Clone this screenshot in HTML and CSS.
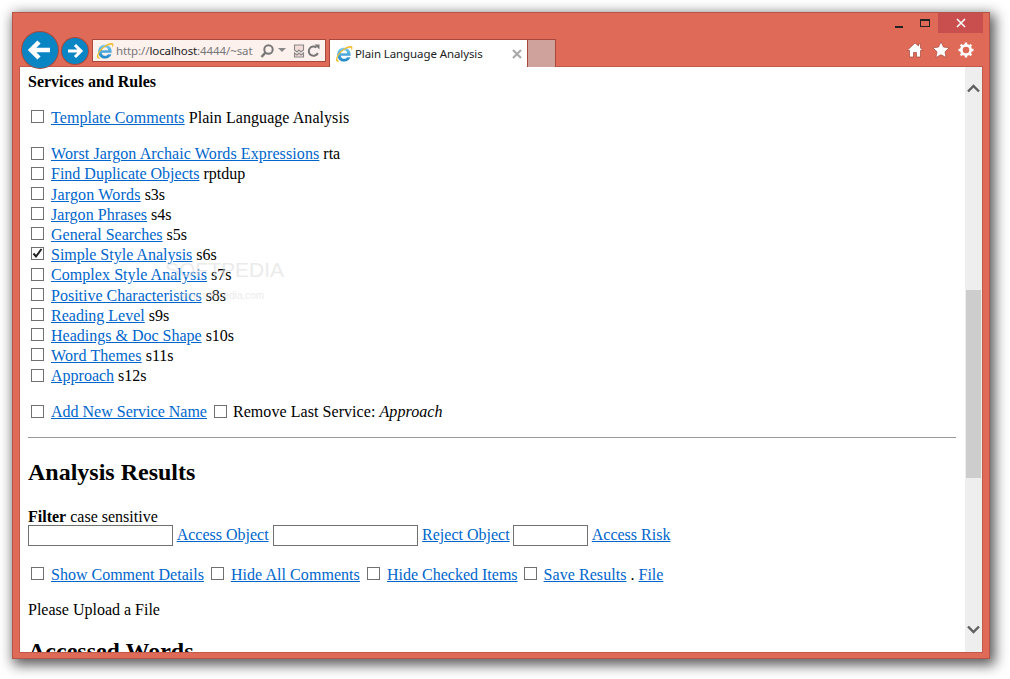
FILE: index.html
```html
<!DOCTYPE html>
<html lang="en">
<head>
<meta charset="utf-8">
<title>Plain Language Analysis</title>
<link rel="stylesheet" href="styles.css">
</head>
<body>
<svg class="defs" width="0" height="0" aria-hidden="true">
  <defs>
    <linearGradient id="ieblue" x1="0" y1="0" x2="0" y2="1"><stop offset="0" stop-color="#7ccdf2"/><stop offset="1" stop-color="#1c84c6"/></linearGradient>
    <symbol id="ie" viewBox="0 0 18 18">
      <g transform="translate(9 9.500) scale(1.350) translate(-9 -9.200)">
        <path d="M9 4.200c2.900 0 4.900 2 4.900 5v.9H6.600c.1 1.500 1.200 2.300 2.600 2.300 1 0 1.700-.4 2-1.100h2.600c-.6 2-2.400 3.100-4.600 3.100-3 0-5.200-2-5.200-5.100S6.100 4.200 9 4.200zm0 1.900c-1.300 0-2.200.8-2.400 2.200h4.700C11.200 6.900 10.300 6.100 9 6.100z" fill="url(#ieblue)"/>
      </g>
      <path d="M1.200 16C-.2 13.400 3.800 6.300 9.500 3.200c3-1.700 6.200-2.800 7.500-1.600.9.900.3 2.500-.8 4.300.3-1.500.3-2.600-.3-3-.9-.7-3.500.2-6 1.600C4.800 7.500 1.400 12.700 2.700 15.200c.5.800 1.800.9 3.300.4-1.800 1.100-3.900 1.500-4.800.4z" fill="#f2bd2e"/>
    </symbol>
  </defs>
</svg>
<div class="window">
  <div class="titlebar">
    <div class="caption caption-min"><span class="min-glyph"></span></div>
    <div class="caption caption-max"><span class="max-glyph"></span></div>
    <div class="caption caption-close">
      <svg width="10" height="10" viewBox="0 0 10 10"><path d="M1 1l8 8M9 1l-8 8" stroke="#fff" stroke-width="1.600"/></svg>
    </div>
  </div>
  <div class="toolbar">
    <div class="nav-back">
      <svg width="36" height="36" viewBox="0 0 36 36"><path d="M28 18H10M17 10l-8 8 8 8" fill="none" stroke="#fff" stroke-width="4.500"/></svg>
    </div>
    <div class="nav-forward">
      <svg width="26" height="26" viewBox="0 0 26 26"><path d="M6 13h13M13 7l6 6-6 6" fill="none" stroke="#fff" stroke-width="3"/></svg>
    </div>
    <div class="address">
      <svg class="fav" width="18" height="18"><use href="#ie"/></svg>
      <span class="url"><span class="dim">http://</span>localhost<span class="dim">:4444/~sat</span></span>
      <svg class="addr-icon" width="16" height="16" viewBox="0 0 16 16"><circle cx="9.500" cy="6.500" r="4.200" fill="none" stroke="#777" stroke-width="2"/><path d="M6.500 9.500L2.500 14" stroke="#777" stroke-width="2.500"/></svg>
      <svg class="addr-caret" width="8" height="5" viewBox="0 0 8 5"><path d="M0 0h8L4 4z" fill="#888"/></svg>
      <svg class="addr-compat" width="12" height="14" viewBox="0 0 12 14"><path d="M1.500 1h9v5l-2.500 2-2-2-2 2-2.500-2zM1.500 9l2.500 2 2-2 2 2 2.500-2v4h-9z" fill="#f3dcd7" stroke="#888" stroke-width="1.100"/></svg>
      <svg class="addr-refresh" width="13" height="14" viewBox="0 0 13 14"><path d="M10.800 9A4.700 4.700 0 1 1 9.500 3.500" fill="none" stroke="#777" stroke-width="2"/><path d="M7.500 0.500h5v5z" fill="#777"/></svg>
    </div>
    <div class="tab">
      <svg class="fav" width="18" height="18"><use href="#ie"/></svg>
      <span class="tab-title">Plain Language Analysis</span>
      <svg class="tab-close" width="10" height="10" viewBox="0 0 10 10"><path d="M1 1l8 8M9 1l-8 8" stroke="#aaa" stroke-width="2.200"/></svg>
    </div>
    <div class="tab-new"></div>
    <div class="tools">
      <svg width="18" height="16" viewBox="0 0 18 16"><path d="M9 1L1 8.500h2.500V15h4v-4.500h3V15h4V8.500H17L14.500 6V2h-2v2z" fill="#fff" stroke="#a8483c" stroke-width=".7"/></svg>
      <svg width="18" height="17" viewBox="0 0 18 17"><path d="M9 .8l2.500 5.300 5.700.7-4.200 4 1.100 5.700L9 13.700l-5.100 2.800L5 10.800.8 6.800l5.700-.7z" fill="#fff" stroke="#a8483c" stroke-width=".7"/></svg>
      <svg width="16" height="16" viewBox="0 0 16 16"><circle cx="8" cy="8" r="4.700" fill="none" stroke="#fff" stroke-width="2.800"/><path d="M8 .5v3M8 12.500v3M.5 8h3M12.500 8h3M2.700 2.700l2.100 2.100M11.200 11.200l2.100 2.100M13.300 2.700l-2.100 2.100M4.800 11.200l-2.100 2.100" stroke="#fff" stroke-width="2.400"/></svg>
    </div>
  </div>
  <div class="viewport">
    <main class="page">
      <p class="heading"><b>Services and Rules</b></p>
      <p class="row ls-s"><input class="cb" type="checkbox"><a href="#">Template Comments</a> Plain Language Analysis</p>
      <div class="list">
        <p class="row"><input class="cb" type="checkbox"><a class="ls-m" href="#">Worst Jargon Archaic Words Expressions</a> rta</p>
        <p class="row"><input class="cb" type="checkbox"><a href="#">Find Duplicate Objects</a> rptdup</p>
        <p class="row"><input class="cb" type="checkbox"><a class="ls-l" href="#">Jargon Words</a> s3s</p>
        <p class="row"><input class="cb" type="checkbox"><a class="ls-s" href="#">Jargon Phrases</a> s4s</p>
        <p class="row"><input class="cb" type="checkbox"><a href="#">General Searches</a> s5s</p>
        <p class="row"><input class="cb" type="checkbox" checked><a href="#">Simple Style Analysis</a> s6s</p>
        <p class="row"><input class="cb" type="checkbox"><a class="ls-s" href="#">Complex Style Analysis</a> s7s</p>
        <p class="row"><input class="cb" type="checkbox"><a href="#">Positive Characteristics</a> s8s</p>
        <p class="row"><input class="cb" type="checkbox"><a href="#">Reading Level</a> s9s</p>
        <p class="row"><input class="cb" type="checkbox"><a href="#">Headings &amp; Doc Shape</a> s10s</p>
        <p class="row"><input class="cb" type="checkbox"><a class="ls-m" href="#">Word Themes</a> s11s</p>
        <p class="row"><input class="cb" type="checkbox"><a href="#">Approach</a> s12s</p>
      </div>
      <p class="row"><input class="cb" type="checkbox"><a href="#">Add New Service Name</a> <input class="cb cb-gap cb-short" type="checkbox"><span class="ls-s">Remove Last Service: <i>Approach</i></span></p>
      <hr class="rule">
      <h2 class="title">Analysis Results</h2>
      <div class="filter">
        <div><b>Filter</b> case sensitive</div>
        <div class="filter-fields">
          <input class="field field-wide" type="text"> <a href="#">Access Object</a>
          <input class="field field-wide" type="text"> <a href="#">Reject Object</a>
          <input class="field field-narrow" type="text"> <a href="#">Access Risk</a>
        </div>
      </div>
      <p class="row actions"><input class="cb" type="checkbox"><a href="#">Show Comment Details</a> <input class="cb cb-gap" type="checkbox"><a class="ls-s" href="#">Hide All Comments</a> <input class="cb cb-gap" type="checkbox"><a href="#">Hide Checked Items</a> <input class="cb cb-gap cb-pull" type="checkbox"><a class="ls-s" href="#">Save Results</a> . <a href="#">File</a></p>
      <p class="upload">Please Upload a File</p>
      <h2 class="title title-next">Accessed Words</h2>
    </main>
    <div class="scrollbar">
      <svg class="arrow" width="13" height="9" viewBox="0 0 13 9"><path d="M1 7.500l5.500-5.500 5.500 5.500" fill="none" stroke="#606060" stroke-width="2.400"/></svg>
      <div class="thumb"></div>
      <svg class="arrow arrow-down" width="13" height="9" viewBox="0 0 13 9"><path d="M1 1.500l5.500 5.500 5.500-5.500" fill="none" stroke="#606060" stroke-width="2.400"/></svg>
    </div>
    <div class="watermark"><span class="wm-name">SOFTPEDIA</span><span class="wm-url">www.softpedia.com</span></div>
  </div>
</div>
</body>
</html>
```
FILE: styles.css
```css
html, body {
  margin: 0;
  height: 100%;
  overflow: hidden;
  background: #fff;
}
body {
  padding: 12px 0 0 12px;
  box-sizing: border-box;
}
.defs { position: absolute; }
.window {
  width: 978px;
  height: 647px;
  box-sizing: border-box;
  display: flex;
  flex-direction: column;
  background: #de6a57;
  border: 1px solid #b4554a;
  box-shadow: 3px 4px 12px 2px rgba(0, 0, 0, .65);
}
.titlebar {
  display: flex;
  justify-content: flex-end;
  height: 20px;
  padding-right: 6px;
  flex: none;
}
.caption {
  display: flex;
  align-items: center;
  justify-content: center;
}
.caption-min { width: 26px; }
.caption-max { width: 26px; }
.caption-close { width: 45px; background: #c94f4f; }
.min-glyph { width: 8px; height: 2px; background: #222; margin-top: 7px; }
.max-glyph { width: 8px; height: 5px; border: 1px solid #222; border-top-width: 2px; margin-top: -1px; }
.toolbar {
  display: flex;
  align-items: flex-start;
  height: 34px;
  flex: none;
  padding-left: 9px;
  position: relative;
  z-index: 1;
}
.nav-back {
  width: 36px;
  height: 36px;
  margin-top: -1px;
  border-radius: 50%;
  background: #0a85c4;
  box-shadow: 0 0 0 1px #a8483c;
  flex: none;
}
.nav-forward {
  width: 26px;
  height: 26px;
  margin: 5px 0 0 4px;
  border-radius: 50%;
  background: #0a85c4;
  box-shadow: 0 0 0 1px #a8483c;
  flex: none;
}
.nav-back svg, .nav-forward svg { display: block; }
.address {
  width: 234px;
  height: 23px;
  margin: 6px 0 0 4px;
  box-sizing: border-box;
  display: flex;
  align-items: center;
  padding-left: 3px;
  background: #fdf1ee;
  border: 1px solid #a8483c;
  font: 11.5px "Noto Sans", sans-serif;
  letter-spacing: -.1px;
  color: #222;
  flex: none;
}
.url { margin-left: 2px; width: 143px; white-space: nowrap; overflow: hidden; }
.dim { color: #777; }
.addr-icon { margin-left: 0; }
.addr-caret { margin-left: 3px; }
.addr-compat { margin-left: 7px; }
.addr-refresh { margin-left: 2px; }
.tab {
  width: 199px;
  height: 28px;
  margin: 6px 0 0 3px;
  box-sizing: border-box;
  display: flex;
  align-items: center;
  padding: 0 5px 0 5px;
  background: #fff;
  border: 1px solid #a8483c;
  border-bottom: 0;
  flex: none;
  font: 11.5px "Noto Sans", sans-serif;
  letter-spacing: -.1px;
  color: #222;
}
.tab-title { margin-left: 2px; flex: 1; white-space: nowrap; }
.tab-new {
  width: 28px;
  height: 28px;
  margin-top: 6px;
  box-sizing: border-box;
  background: #cfa39b;
  border: 1px solid #a8483c;
  border-left: 0;
  border-bottom: 0;
  flex: none;
}
.tools {
  margin-left: auto;
  margin-right: 15px;
  margin-top: 8px;
  display: flex;
  align-items: center;
  gap: 8px;
}
.viewport {
  flex: none;
  height: 585px;
  margin: 0 7px;
  display: flex;
  position: relative;
  background: #fff;
  overflow: hidden;
  outline: 1px solid #c25a4c;
}
.page {
  flex: 1;
  min-width: 0;
  box-sizing: border-box;
  padding: 6px 9px 0 8px;
  overflow: hidden;
  font: 16px/18px "Liberation Serif", serif;
  color: #000;
}
.page a { color: #0066cc; text-decoration: underline; }
.heading, .row, .upload { margin: 0; }
.heading { height: 18px; }
.row {
  height: 20.2px;
  line-height: 20.2px;
  white-space: nowrap;
}
.heading + .row { margin-top: 17px; }
.list { margin-top: 16px; }
.list + .row { margin-top: 16px; }
.ls-s { letter-spacing: .06px; }
.ls-m { letter-spacing: .105px; }
.ls-l { letter-spacing: .18px; }
.cb {
  appearance: none;
  width: 13px;
  height: 13px;
  margin: 0 7px 5px 3px;
  box-sizing: border-box;
  border: 1px solid #707070;
  background: #fff;
  vertical-align: middle;
}
.cb:checked {
  background: #fff url("data:image/svg+xml,%3Csvg xmlns='http://www.w3.org/2000/svg' viewBox='0 0 11 11'%3E%3Cpath d='M1.500 5.500l2.500 3 5.500-7.500' fill='none' stroke='%23222' stroke-width='2'/%3E%3C/svg%3E") center/11px no-repeat;
}
.cb-short { margin-right: 6px; }
.cb-pull { margin-left: 2px; }
.rule {
  height: 1px;
  margin: 14px 0 0;
  border: 0;
  background: #999;
}
.title {
  margin: 20px 0 0;
  font-size: 24px;
  line-height: 28px;
  font-weight: bold;
}
.filter { margin-top: 22px; }
.filter-fields { height: 21px; white-space: nowrap; }
.field {
  height: 21px;
  box-sizing: border-box;
  padding: 0 2px;
  border: 1px solid #707070;
  background: #fff;
  vertical-align: top;
  margin: -1px 0 0;
}
.field-wide { width: 145px; margin-right: .5px; }
.field-narrow { width: 75px; margin-left: -1px; margin-right: 1px; }
.actions { margin-top: 18px; }
.upload { margin-top: 16px; }
.title-next { margin-top: 18px; }
.scrollbar {
  width: 17px;
  flex: none;
  background: #eee;
  display: flex;
  flex-direction: column;
  align-items: center;
}
.arrow { margin-top: 17px; flex: none; }
.arrow-down { margin-top: auto; margin-bottom: 18px; }
.thumb {
  width: 15px;
  height: 188px;
  margin-top: 197px;
  background: #cdcdcd;
  flex: none;
}
.watermark {
  position: absolute;
  left: 145px;
  top: 190px;
  display: flex;
  flex-direction: column;
  color: #d9d9d9;
  opacity: .5;
  pointer-events: none;
}
.wm-name { font: 21px/26px "Liberation Sans", sans-serif; }
.wm-url { font: 10px/14px "Liberation Sans", sans-serif; margin: 6px 0 0 13px; }
```
